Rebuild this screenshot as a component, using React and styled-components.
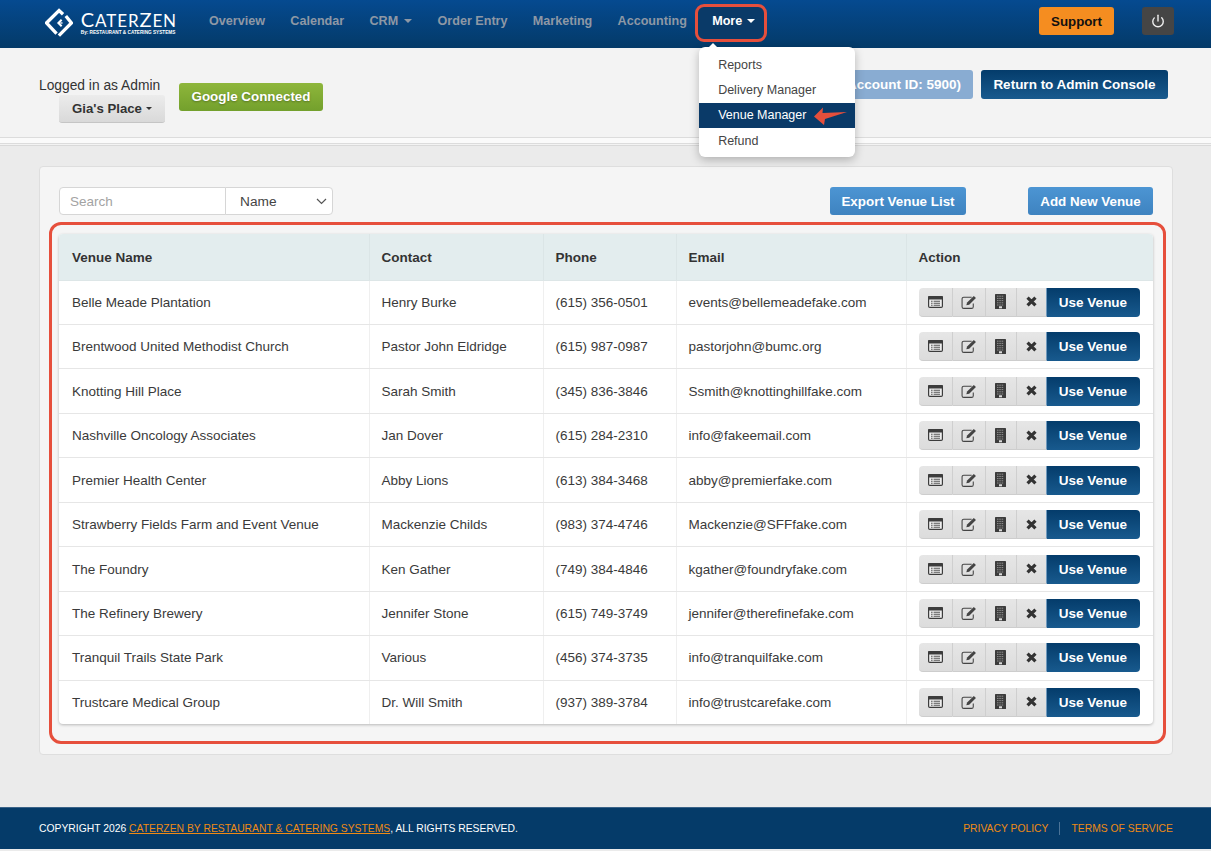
import React from 'react';
import styled, { createGlobalStyle } from 'styled-components';
import { Power } from 'lucide-react';

const venues = [
  ['Belle Meade Plantation', 'Henry Burke', '(615) 356-0501', 'events@bellemeadefake.com'],
  ['Brentwood United Methodist Church', 'Pastor John Eldridge', '(615) 987-0987', 'pastorjohn@bumc.org'],
  ['Knotting Hill Place', 'Sarah Smith', '(345) 836-3846', 'Ssmith@knottinghillfake.com'],
  ['Nashville Oncology Associates', 'Jan Dover', '(615) 284-2310', 'info@fakeemail.com'],
  ['Premier Health Center', 'Abby Lions', '(613) 384-3468', 'abby@premierfake.com'],
  ['Strawberry Fields Farm and Event Venue', 'Mackenzie Childs', '(983) 374-4746', 'Mackenzie@SFFfake.com'],
  ['The Foundry', 'Ken Gather', '(749) 384-4846', 'kgather@foundryfake.com'],
  ['The Refinery Brewery', 'Jennifer Stone', '(615) 749-3749', 'jennifer@therefinefake.com'],
  ['Tranquil Trails State Park', 'Various', '(456) 374-3735', 'info@tranquilfake.com'],
  ['Trustcare Medical Group', 'Dr. Will Smith', '(937) 389-3784', 'info@trustcarefake.com'],
];

const navItems = [
  { label: 'Overview' },
  { label: 'Calendar' },
  { label: 'CRM', caret: true },
  { label: 'Order Entry' },
  { label: 'Marketing' },
  { label: 'Accounting' },
];

const GlobalStyle = createGlobalStyle`
  html, body {
    margin: 0;
    padding: 0;
    background: #ebebeb;
    font-family: "Liberation Sans", Arial, sans-serif;
    color: #333;
  }
  * { box-sizing: border-box; }
`;

const Page = styled.div`
  width: 1211px;
  height: 851px;
  overflow: hidden;
  display: flex;
  flex-direction: column;
`;

const Header = styled.header`
  height: 48px;
  flex: none;
  padding: 0 37px 6px 45px;
  display: flex;
  align-items: center;
  background: linear-gradient(#054a90, #043a68);
`;

const Brand = styled.div`
  width: 132px;
  height: 32px;
  flex: none;
  display: flex;
  gap: 8px;
  align-items: center;
  margin-top: 3px;
`;

const BrandText = styled.div`
  display: flex;
  flex-direction: column;
  color: #fff;
`;

const BrandName = styled.span`
  font-family: "Lato", "Liberation Sans", sans-serif;
  font-weight: 400;
  font-size: 20px;
  line-height: 19px;
  letter-spacing: 0.9px;
  white-space: nowrap;
  small { font-size: 17px; }
`;

const BrandTag = styled.span`
  font-size: 4.7px;
  line-height: 6px;
  font-weight: 700;
  white-space: nowrap;
`;

const Nav = styled.nav`
  margin-left: 32px;
  display: flex;
  align-items: center;
  gap: 25.3px;
`;

const NavLink = styled.a`
  position: relative;
  font-size: 12.6px;
  font-weight: 700;
  color: ${p => (p.$active ? '#fff' : '#8e98a5')};
  white-space: nowrap;
  display: flex;
  align-items: center;
  gap: 6px;
`;

const Caret = styled.i`
  display: inline-block;
  width: 0;
  height: 0;
  border-left: ${p => p.$size || 4}px solid transparent;
  border-right: ${p => p.$size || 4}px solid transparent;
  border-top: ${p => p.$size || 4}px solid currentColor;
`;

const MoreHighlight = styled.span`
  position: absolute;
  left: -17px;
  top: -10px;
  width: 72px;
  height: 38px;
  border: 3px solid #e64f3c;
  border-radius: 9px;
  background: #0a3a68;
  z-index: 0;
`;

const MoreLabel = styled.span`
  position: relative;
  z-index: 1;
  display: flex;
  align-items: center;
  gap: 5px;
`;

const Dropdown = styled.div`
  position: absolute;
  left: -13px;
  top: 33px;
  width: 156px;
  height: 110px;
  padding-top: 5px;
  background: #fff;
  border-radius: 6px;
  box-shadow: 0 3px 10px rgba(0, 0, 0, 0.25);
  z-index: 5;
  &::before {
    content: '';
    position: absolute;
    left: 9px;
    top: -4px;
    border-left: 5px solid transparent;
    border-right: 5px solid transparent;
    border-bottom: 5px solid #fff;
  }
`;

const DropItem = styled.div`
  height: 25.3px;
  padding-left: 19px;
  display: flex;
  align-items: center;
  font-size: 12.5px;
  font-weight: 400;
  color: ${p => (p.$active ? '#fff' : '#444')};
  background: ${p => (p.$active ? '#0a3a68' : 'transparent')};
`;

const ArrowMark = styled.svg`
  position: absolute;
  left: 115px;
  top: 60px;
`;

const HeaderRight = styled.div`
  margin-left: auto;
  display: flex;
  align-items: center;
  gap: 28px;
`;

const SupportBtn = styled.button`
  width: 75px;
  height: 28px;
  border: 0;
  border-radius: 3px;
  background: #f58d20;
  color: #111;
  font: 700 13.3px "Liberation Sans", sans-serif;
`;

const PowerBtn = styled.button`
  width: 32px;
  height: 28px;
  border: 0;
  border-radius: 3px;
  background: #454545;
  color: #eee;
  padding: 0;
  display: flex;
  align-items: center;
  justify-content: center;
`;

const SubHeader = styled.div`
  height: 98px;
  flex: none;
  padding: 0 43px 0 39px;
  position: relative;
  display: flex;
  background: #f3f3f3;
  border-bottom: 1px solid #d9d9d9;
  &::after {
    content: '';
    position: absolute;
    left: 0;
    right: 0;
    top: 89px;
    height: 5px;
    background: #fafafa;
    border-top: 1px solid #dcdcdc;
    border-bottom: 1px solid #dcdcdc;
  }
`;

const UserBlock = styled.div`
  width: 140px;
  padding-top: 29px;
  display: flex;
  flex-direction: column;
`;

const LoggedIn = styled.span`
  font-size: 13.8px;
  line-height: 17px;
  color: #333;
  white-space: nowrap;
`;

const PlaceBtn = styled.button`
  margin: 1px 0 0 20px;
  width: 106px;
  height: 28px;
  border: 0;
  border-bottom: 1px solid #c5c5c5;
  border-radius: 3px;
  background: linear-gradient(#ececec, #d9d9d9);
  color: #333;
  font: 700 13.2px "Liberation Sans", sans-serif;
  display: flex;
  align-items: center;
  justify-content: center;
  gap: 4px;
`;

const GoogleBtn = styled.button`
  margin-top: 35px;
  width: 144px;
  height: 28px;
  padding: 0 0 2px;
  border: 0;
  border-radius: 3px;
  background: linear-gradient(#8eb63b, #73a02c);
  color: #fff;
  font: 700 13.4px "Liberation Sans", sans-serif;
  text-shadow: 0 1px 2px rgba(0, 0, 0, 0.3);
`;

const AccountActions = styled.div`
  margin-left: auto;
  margin-top: 22px;
  display: flex;
  gap: 8px;
  height: 29px;
`;

const AccountBtn = styled.button`
  height: 29px;
  padding: 0 12px;
  border: 0;
  border-radius: 3px;
  background: #89acd2;
  color: #fff;
  font: 700 13.5px "Liberation Sans", sans-serif;
  white-space: nowrap;
`;

const NavyBtn = styled.button`
  height: 29px;
  width: ${p => p.$width};
  padding: 0;
  border: 0;
  border-radius: ${p => p.$radius || '3px'};
  background: linear-gradient(#043c6b, #185a8e);
  color: #fff;
  font: 700 13.5px "Liberation Sans", sans-serif;
  white-space: nowrap;
`;

const Main = styled.main`
  flex: 1;
  padding: 20px 38px 0 39px;
`;

const Card = styled.section`
  height: 589px;
  padding: 20px 6px 0 9px;
  background: #f5f5f5;
  border: 1px solid #dedede;
  border-radius: 4px;
`;

const Toolbar = styled.div`
  height: 28px;
  padding: 0 12px 0 10px;
  display: flex;
  align-items: center;
`;

const SearchBox = styled.input`
  width: 167px;
  height: 28px;
  padding: 0 10px;
  border: 1px solid #d6d6d6;
  border-radius: 4px 0 0 4px;
  background: #fff;
  font: 13.5px "Liberation Sans", sans-serif;
  outline: none;
  &::placeholder { color: #a3a3a3; }
`;

const SelectBox = styled.div`
  width: 108px;
  height: 28px;
  margin-left: -1px;
  padding: 0 5px 0 14px;
  display: flex;
  align-items: center;
  justify-content: space-between;
  border: 1px solid #d6d6d6;
  border-radius: 0 4px 4px 0;
  background: #fff;
  font-size: 13.7px;
  color: #444;
`;

const BlueBtn = styled.button`
  height: 28px;
  width: ${p => p.$width};
  margin-left: ${p => p.$left};
  padding: 0;
  border: 0;
  border-radius: 3px;
  background: linear-gradient(#4c95d3, #3e83c0);
  color: #fff;
  font: 700 13.4px "Liberation Sans", sans-serif;
`;

const Highlight = styled.div`
  margin-top: 7px;
  height: 522px;
  padding: 9px 10px 0 7px;
  border: 3px solid #e64f3c;
  border-radius: 12px;
`;

const TableWrap = styled.div`
  height: 490px;
  border-radius: 4px;
  overflow: hidden;
  background: #fff;
  box-shadow: 0 1px 3px rgba(0, 0, 0, 0.25);
`;

const Table = styled.table`
  width: 1094px;
  height: 490px;
  table-layout: fixed;
  border-collapse: collapse;
`;

const HeadCell = styled.th`
  height: 46px;
  width: ${p => p.$width};
  padding: 1px 0 0 12px;
  text-align: left;
  font-size: 13.5px;
  font-weight: 700;
  color: #333;
  background: #e3edee;
  border-right: 1px solid #dbe5e6;
  border-bottom: 1px solid #dde6e7;
  &:first-child { padding-left: 13px; }
  &:last-child { border-right: 0; }
`;

const Cell = styled.td`
  padding: 0 0 0 12px;
  font-size: 13.5px;
  color: #3a3a3a;
  white-space: nowrap;
  border-right: 1px solid #efefef;
  border-bottom: 1px solid #e6e6e6;
  &:first-child { padding-left: 13px; }
  &:last-child { border-right: 0; }
  tr:last-child & { border-bottom: 0; }
`;

const ActionGroup = styled.div`
  display: flex;
  height: 29px;
`;

const IconBtn = styled.button`
  width: ${p => p.$width};
  height: 29px;
  padding: 0;
  border: 0;
  border-right: 1px solid #cfcfcf;
  border-bottom: 1px solid #cdcdcd;
  border-radius: ${p => (p.$first ? '4px 0 0 4px' : '0')};
  background: linear-gradient(#e6e6e6, #dcdcdc);
  display: flex;
  align-items: center;
  justify-content: center;
  &:nth-child(4) { border-right: 1px solid #6f99bd; }
`;

const Footer = styled.footer`
  height: 42px;
  flex: none;
  margin-bottom: 2px;
  padding: 0 38px 0 39px;
  display: flex;
  align-items: center;
  background: #053b69;
  border-top: 1px solid #3a6388;
  font-size: 10.35px;
  color: #fff;
  white-space: nowrap;
`;

const FooterLink = styled.a`
  color: #ee8a14;
  text-decoration: ${p => (p.$underline ? 'underline' : 'none')};
`;

const FooterLinks = styled.div`
  margin-left: auto;
  display: flex;
  align-items: center;
  gap: 11px;
`;

const FooterSep = styled.span`
  width: 1px;
  height: 13px;
  background: #4b7397;
`;

const LogoMark = () => (
  <svg width="30" height="30" viewBox="0 0 30 30" fill="none" stroke="#fff" strokeWidth="3.6">
    <path d="M19.5 5.5 L15.2 1.5 L1.6 15 L12.5 26.5" />
    <path d="M22.5 7.5 L28.6 15 L15 28.6" />
    <path d="M18 11.5 L14.5 15 L18 18.5" strokeWidth="2.2" />
    <path d="M16.5 15h2.5" strokeWidth="1.4" />
  </svg>
);

const ListIcon = () => (
  <svg width="15" height="12" viewBox="0 0 15 12">
    <rect x="0.6" y="0.6" width="13.8" height="10.8" rx="1.2" fill="#eee" stroke="#3c3c3c" strokeWidth="1.2" />
    <rect x="0" y="0" width="15" height="3.4" rx="1" fill="#3c3c3c" />
    <path d="M3 5.2h1.6M3 7.2h1.6M3 9.2h1.6M5.6 5.2h6.4M5.6 7.2h6.4M5.6 9.2h6.4" stroke="#555" strokeWidth="1.1" />
  </svg>
);

const EditIcon = () => (
  <svg width="16" height="14" viewBox="0 0 15 13" fill="none">
    <path d="M10 2H2.6A1.6 1.6 0 0 0 1 3.6v7.3a1.6 1.6 0 0 0 1.6 1.6h7.3a1.6 1.6 0 0 0 1.6-1.6V8" stroke="#444" strokeWidth="1" />
    <path d="M5 9.6l.7-2.6L12 .8l2 2-6.3 6.2z" fill="#444" />
  </svg>
);

const BuildingIcon = () => (
  <svg width="11" height="15" viewBox="0 0 11 15">
    <rect width="11" height="15" rx="0.6" fill="#3c3c3c" />
    <path d="M2 2.2h7M2 4.4h7M2 6.6h7M2 8.8h7M2 11h7" stroke="#9a9a9a" strokeWidth="0.9" strokeDasharray="1.5 .8" />
    <rect x="4" y="12.3" width="3" height="2" fill="#ddd" />
  </svg>
);

const CloseIcon = () => (
  <svg width="11" height="11" viewBox="0 0 10 10">
    <path d="M1.4 1.4l7.2 7.2M8.6 1.4L1.4 8.6" stroke="#333" strokeWidth="2.9" />
  </svg>
);

const Chevron = () => (
  <svg width="11" height="7" viewBox="0 0 11 7" fill="none">
    <path d="M1 1l4.5 4.5L10 1" stroke="#555" strokeWidth="1.2" />
  </svg>
);

const App = () => (
  <Page>
    <GlobalStyle />
    <Header>
      <Brand>
        <LogoMark />
        <BrandText>
          <BrandName>C<small>ATER</small>Z<small>EN</small></BrandName>
          <BrandTag>By: RESTAURANT &amp; CATERING SYSTEMS</BrandTag>
        </BrandText>
      </Brand>
      <Nav>
        {navItems.map(item => (
          <NavLink key={item.label}>
            {item.label}
            {item.caret && <Caret />}
          </NavLink>
        ))}
        <NavLink $active>
          <MoreHighlight />
          <MoreLabel>More <Caret /></MoreLabel>
          <Dropdown>
            <DropItem>Reports</DropItem>
            <DropItem>Delivery Manager</DropItem>
            <DropItem $active>Venue Manager</DropItem>
            <DropItem>Refund</DropItem>
            <ArrowMark width="34" height="19" viewBox="0 0 34 19">
              <path d="M0 9.5 L9 0.5 L8.5 6 L33 5 L11 12 L10 18 Z" fill="#e64f3c" />
            </ArrowMark>
          </Dropdown>
        </NavLink>
      </Nav>
      <HeaderRight>
        <SupportBtn>Support</SupportBtn>
        <PowerBtn><Power size={14} strokeWidth={2.4} /></PowerBtn>
      </HeaderRight>
    </Header>

    <SubHeader>
      <UserBlock>
        <LoggedIn>Logged in as Admin</LoggedIn>
        <PlaceBtn>Gia's Place <Caret $size={3} /></PlaceBtn>
      </UserBlock>
      <GoogleBtn>Google Connected</GoogleBtn>
      <AccountActions>
        <AccountBtn>(Account ID: 5900)</AccountBtn>
        <NavyBtn $width="187px">Return to Admin Console</NavyBtn>
      </AccountActions>
    </SubHeader>

    <Main>
      <Card>
        <Toolbar>
          <SearchBox placeholder="Search" />
          <SelectBox>Name <Chevron /></SelectBox>
          <BlueBtn $width="136px" $left="497px">Export Venue List</BlueBtn>
          <BlueBtn $width="125px" $left="62px">Add New Venue</BlueBtn>
        </Toolbar>
        <Highlight>
          <TableWrap>
            <Table>
              <thead>
                <tr>
                  <HeadCell $width="310px">Venue Name</HeadCell>
                  <HeadCell $width="174px">Contact</HeadCell>
                  <HeadCell $width="133px">Phone</HeadCell>
                  <HeadCell $width="230px">Email</HeadCell>
                  <HeadCell $width="247px">Action</HeadCell>
                </tr>
              </thead>
              <tbody>
                {venues.map(v => (
                  <tr key={v[0]}>
                    <Cell>{v[0]}</Cell>
                    <Cell>{v[1]}</Cell>
                    <Cell>{v[2]}</Cell>
                    <Cell>{v[3]}</Cell>
                    <Cell>
                      <ActionGroup>
                        <IconBtn $width="34px" $first><ListIcon /></IconBtn>
                        <IconBtn $width="33px"><EditIcon /></IconBtn>
                        <IconBtn $width="31px"><BuildingIcon /></IconBtn>
                        <IconBtn $width="30px"><CloseIcon /></IconBtn>
                        <NavyBtn $width="93px" $radius="0 4px 4px 0">Use Venue</NavyBtn>
                      </ActionGroup>
                    </Cell>
                  </tr>
                ))}
              </tbody>
            </Table>
          </TableWrap>
        </Highlight>
      </Card>
    </Main>

    <Footer>
      <span>
        COPYRIGHT 2026 <FooterLink $underline>CATERZEN BY RESTAURANT &amp; CATERING SYSTEMS</FooterLink>, ALL RIGHTS RESERVED.
      </span>
      <FooterLinks>
        <FooterLink>PRIVACY POLICY</FooterLink>
        <FooterSep />
        <FooterLink>TERMS OF SERVICE</FooterLink>
      </FooterLinks>
    </Footer>
  </Page>
);

export default App;
